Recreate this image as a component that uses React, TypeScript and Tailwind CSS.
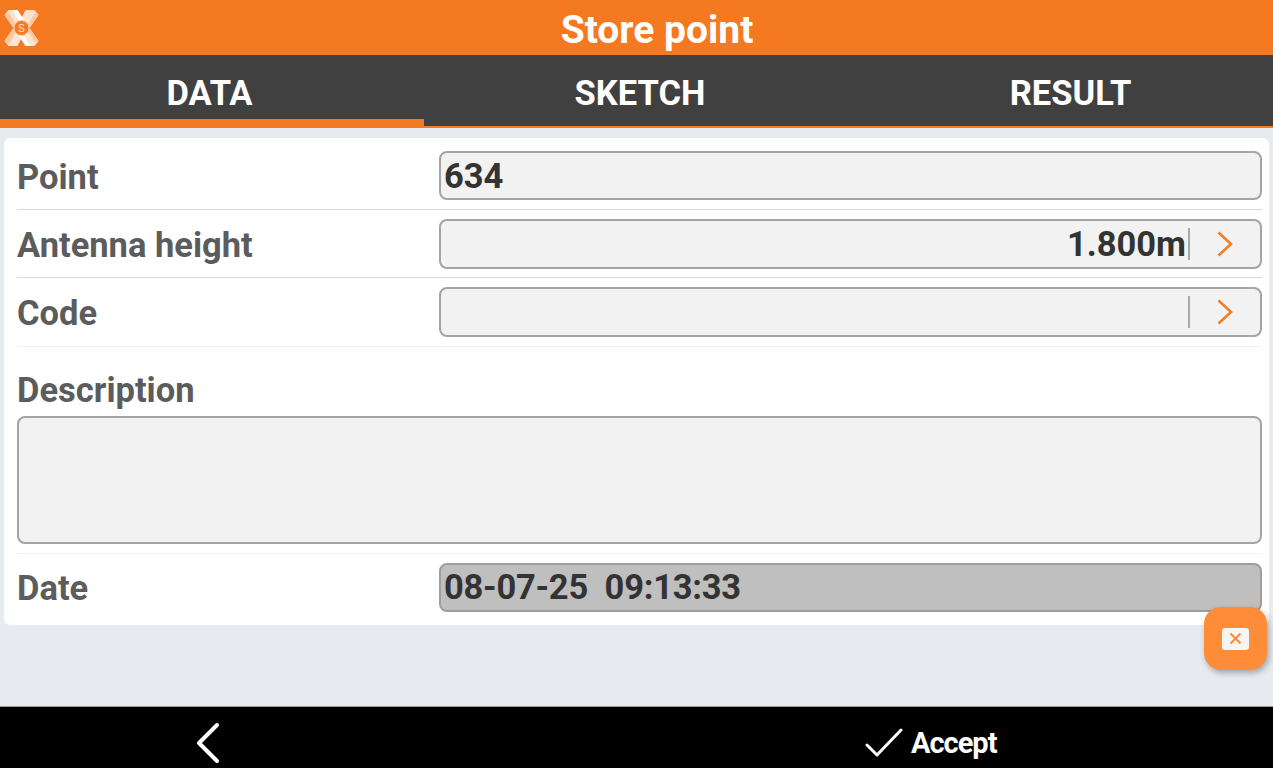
import { useState } from 'react';

function Chevron() {
  return (
    <svg width="20" height="30" viewBox="0 0 20 30" fill="none" stroke="#f57c26" strokeWidth={2.6}>
      <path d="M3.5 3.5 L16 15 L3.5 26.5" />
    </svg>
  );
}

function Logo() {
  return (
    <svg width="37" height="38" viewBox="0 0 36 38">
      <path d="M1 6 L5 1 H14 L18 9 L22 1 H31 L35 6 L26 19 L35 32 L31 37 H22 L18 29 L14 37 H5 L1 32 L10 19 Z" fill="#fde4d0" />
      <path d="M14 1 L24 16 L20 19 L9 1 Z M22 37 L12 22 L16 19 L27 37 Z" fill="#ffffff" />
      <path d="M1 6 L10 19 L1 32 L6 35 L14 19 L6 4 Z M35 6 L26 19 L35 32 L31 33 L23 19 L31 4 Z" fill="#fbc8a3" />
      <circle cx="18" cy="19" r="7.5" fill="#f57920" stroke="#fbc8a3" strokeWidth="1" />
      <text x="18" y="23" textAnchor="middle" fontSize="11" fontFamily="Roboto, sans-serif" fill="#fde4d0">S</text>
    </svg>
  );
}

function FieldRow({ label, children, className }: { label: string; children: React.ReactNode; className: string }) {
  return (
    <div className={`flex items-center border-b border-[#d9d9d9] ${className}`}>
      <div className="w-[422px] pt-[3px] text-[34.5px] font-bold text-[#5c5c5c] leading-none">{label}</div>
      {children}
    </div>
  );
}

function ArrowInput({ value }: { value: string }) {
  return (
    <div className="flex-1 h-[50px] flex items-center bg-[#f2f2f2] border-2 border-[#a4a4a4] rounded-lg">
      <span className="flex-1 pt-px text-right text-[34.5px] font-bold text-[#333333] leading-none">{value}</span>
      <div className="w-[2px] h-[32px] bg-[#a8a8a8] ml-[2px]" />
      <div className="w-[70px] flex justify-center pr-[1px]">
        <Chevron />
      </div>
    </div>
  );
}

export default function App() {
  const [tab, setTab] = useState('DATA');
  const tabs = [
    { name: 'DATA', width: 'w-[424px]', pad: 'pr-[5px]' },
    { name: 'SKETCH', width: 'w-[430px]', pad: 'pl-[2px]' },
    { name: 'RESULT', width: 'flex-1', pad: 'pl-[14px]' },
  ];

  return (
    <div className="relative w-[1273px] h-[768px] flex flex-col bg-[#e7eaef] overflow-hidden font-['Roboto',sans-serif]">
      {/* header */}
      <div className="h-[55px] shrink-0 relative flex items-center justify-center bg-[#f57920]">
        <div className="absolute left-[3px] top-[9px]">
          <Logo />
        </div>
        <span className="text-[39px] font-bold text-white leading-none ml-[41px] mt-[6px]">Store point</span>
      </div>

      {/* tabs */}
      <div className="h-[73px] shrink-0 flex bg-[#404040]">
        {tabs.map((t) => (
          <button
            key={t.name}
            onClick={() => setTab(t.name)}
            className={`${t.width} ${t.pad} flex items-center justify-center text-[34.5px] font-bold text-white leading-none border-b-[#f57920] ${
              tab === t.name ? 'border-b-[9px] pt-[12px]' : 'border-b-2 pt-[5px]'
            }`}
          >
            {t.name}
          </button>
        ))}
      </div>

      {/* form card */}
      <div className="mt-[10px] ml-[4px] mr-[4px] h-[487px] shrink-0 bg-white rounded-md pl-[13px] pr-[7px]">
        <FieldRow label="Point" className="h-[72px] pt-[4px]">
          <div className="flex-1 h-[49px] flex items-center px-[3px] pt-px bg-[#f2f2f2] border-2 border-[#a4a4a4] rounded-lg text-[34.5px] font-bold text-[#333333] leading-none">
            634
          </div>
        </FieldRow>
        <FieldRow label="Antenna height" className="h-[68px]">
          <ArrowInput value="1.800m" />
        </FieldRow>
        <FieldRow label="Code" className="h-[69px] !border-[#f0f0f0]">
          <ArrowInput value="" />
        </FieldRow>
        <div className="mt-[25px] text-[34.5px] font-bold text-[#5c5c5c] leading-[36px]">Description</div>
        <div className="mt-[8px] h-[128px] bg-[#f2f2f2] border-2 border-[#a4a4a4] rounded-lg" />
        <div className="mt-[9px] h-px bg-[#f0f0f0]" />
        <div className="flex items-center h-[66px]">
          <div className="w-[422px] pt-[3px] text-[34.5px] font-bold text-[#5c5c5c] leading-none">Date</div>
          <div className="flex-1 h-[49px] flex items-center px-[3px] bg-[#bfbfbf] border-2 border-[#9e9e9e] rounded-lg text-[34.5px] font-bold tracking-[-0.25px] text-[#333333] leading-none whitespace-pre">
            08-07-25  09:13:33
          </div>
        </div>
      </div>

      <div className="flex-1" />

      {/* bottom bar */}
      <div className="h-[62px] shrink-0 flex items-center pt-[10px] bg-black border-t border-[#9a9a9a]">
        <div className="w-[416px] flex justify-center">
          <svg width="28" height="42" viewBox="0 0 28 42" fill="none" stroke="white" strokeWidth={4} strokeLinecap="round" strokeLinejoin="round">
            <path d="M23 3 L5 21 L23 39" />
          </svg>
        </div>
        <div className="ml-[33px] flex items-center">
          <button className="ml-[416px] flex items-center gap-[8px]">
            <svg width="38" height="30" viewBox="0 0 38 30" fill="none" stroke="white" strokeWidth={3} strokeLinecap="round" strokeLinejoin="round">
              <path d="M2 17 L12 27 L36 2" />
            </svg>
            <span className="pt-[2px] text-[29px] font-bold text-white leading-none tracking-[-1px]">Accept</span>
          </button>
        </div>
      </div>

      {/* floating delete button */}
      <button className="absolute left-[1204px] top-[607px] w-[63px] h-[63px] flex items-center justify-center rounded-[17px] bg-[#ff8c38] shadow-[2px_3px_6px_rgba(0,0,0,0.3)]">
        <span className="w-[27px] h-[22px] flex items-center justify-center rounded-[3px] bg-[#f5f5f5]">
          <svg width="13" height="13" viewBox="0 0 13 13" stroke="#ff8c38" strokeWidth={2}>
            <path d="M1.5 1.5 L11.5 11.5 M11.5 1.5 L1.5 11.5" />
          </svg>
        </span>
      </button>
    </div>
  );
}
